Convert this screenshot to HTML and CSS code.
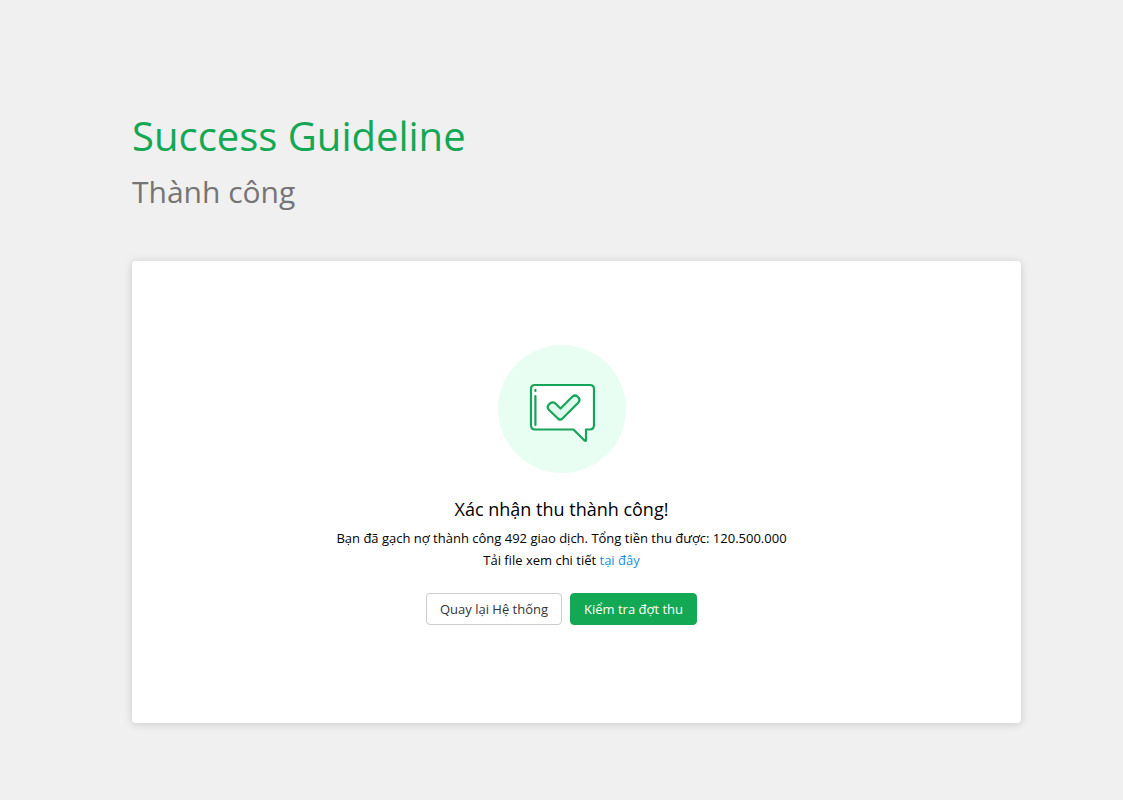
FILE: index.html
```html
<!DOCTYPE html>
<html lang="vi">
<head>
<meta charset="utf-8">
<title>Success Guideline</title>
<link rel="stylesheet" href="styles.css">
</head>
<body>
<main class="page">
  <header class="heading">
    <h1 class="title">Success Guideline</h1>
    <p class="subtitle">Thành công</p>
  </header>
  <section class="card">
    <svg class="badge" viewBox="0 0 128 128" aria-hidden="true">
      <circle cx="64" cy="64" r="64" fill="#e9fef3"/>
      <g fill="none" stroke="#16a458" stroke-width="2.200" stroke-linejoin="round" stroke-linecap="round">
        <path fill="#fff" d="M37 40H92Q96 40 96 44V80Q96 84.500 91.500 84.500H88V95.500Q87.500 96.500 86.500 95.500L75.500 84.500H37Q33 84.500 33 80V44Q33 40 37 40Z"/>
        <path d="M37.400 44.800V46M37.400 51V80"/>
        <path fill="#dffbee" d="M51 65Q48.500 62.500 50.500 60L52.500 58Q55 56.500 57.500 58.500L62.500 63.500L74.500 51.500Q77 49.500 79.500 51.500L80.500 52.500Q82.500 55 80.500 57.500L64.500 73.500Q62.500 75.500 60.500 74Z"/>
      </g>
    </svg>
    <h2 class="message">Xác nhận thu thành công!</h2>
    <p class="detail">Bạn đã gạch nợ thành công 492 giao dịch. Tổng tiền thu được: 120.500.000<br>Tải file xem chi tiết <a class="link" href="#">tại đây</a></p>
    <div class="actions">
      <button class="button" type="button">Quay lại Hệ thống</button>
      <button class="button button-primary" type="button">Kiểm tra đợt thu</button>
    </div>
  </section>
</main>
</body>
</html>
```
FILE: styles.css
```css
* { box-sizing: border-box; }
body {
  margin: 0;
  background: #f0f0f0;
  color: #000;
  font-family: "Open Sans", sans-serif;
}
.page { padding: 108px 102px 77px 132px; }
.heading { margin-bottom: 47px; }
.title, .subtitle, .message, .detail { margin: 0; font-weight: 400; }
.title { color: #12a854; font-size: 40px; line-height: 56px; }
.subtitle { margin-top: 6px; color: #757575; font-size: 30px; line-height: 44px; }
.card {
  display: flex;
  flex-direction: column;
  align-items: center;
  padding: 84px 30px 98px 0;
  background: #fff;
  border-radius: 4px;
  box-shadow: 0 1px 8px rgba(0, 0, 0, 0.16);
  text-align: center;
}
.badge { display: block; width: 128px; height: 128px; }
.message { margin-top: 24px; font-size: 18px; line-height: 24px; }
.detail { margin-top: 6px; font-size: 13px; line-height: 22px; }
.link { color: #1890e0; text-decoration: none; }
.actions { display: flex; gap: 8px; margin-top: 22px; }
.button {
  height: 32px;
  padding: 0 13px;
  border: 1px solid #ccc;
  border-radius: 4px;
  background: #fff;
  color: #333;
  font: 400 13px "Open Sans", sans-serif;
}
.button-primary { border-color: #12a854; background: #12a854; color: #fff; font-weight: 500; }
```
